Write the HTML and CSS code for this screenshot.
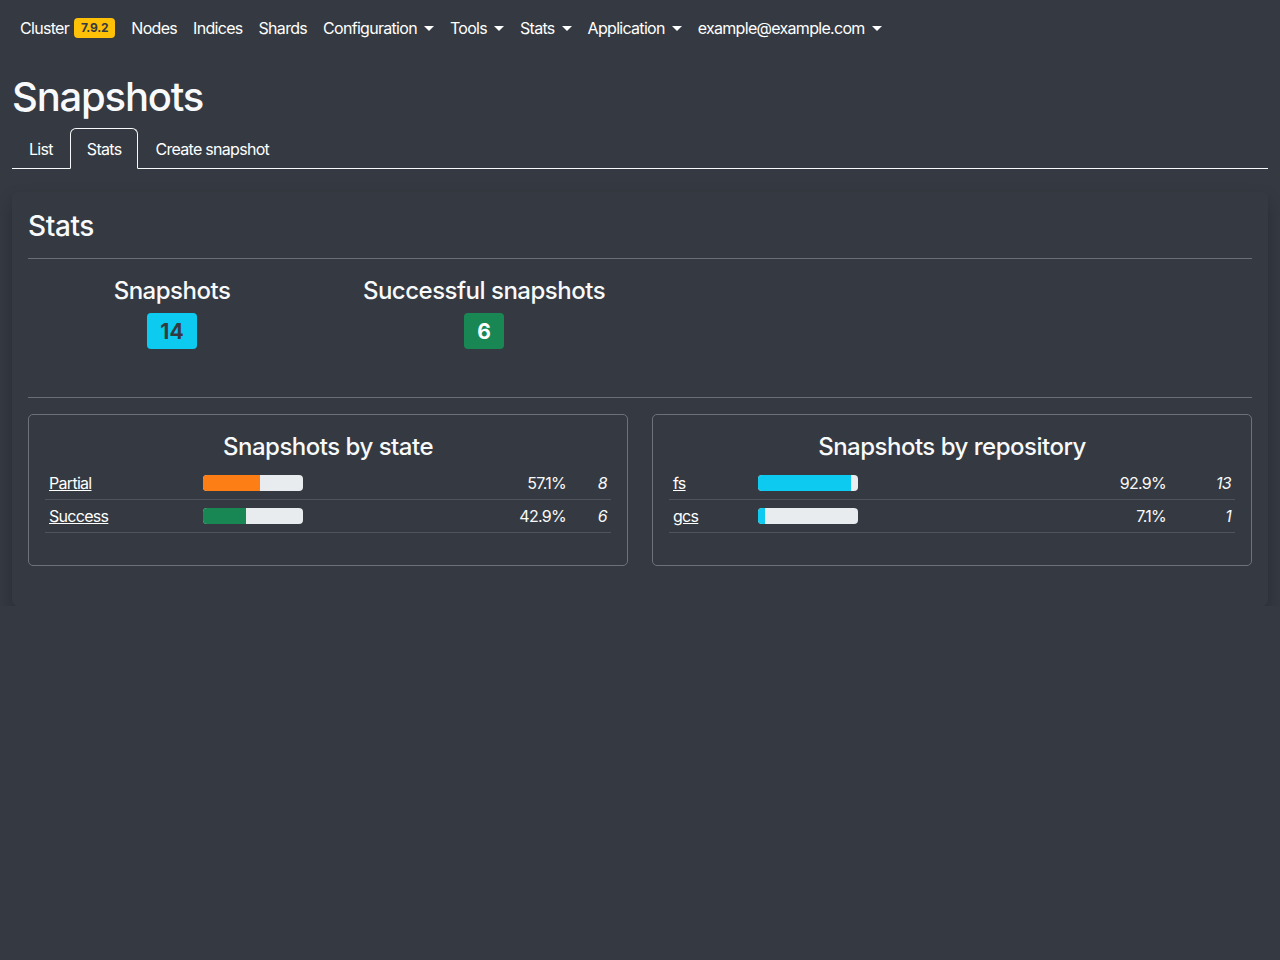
FILE: index.html
```html
<!DOCTYPE html>
<html lang="en">
<head>
<meta charset="utf-8">
<title>Snapshots</title>
<link rel="stylesheet" href="styles.css">
</head>
<body>
<nav class="navbar">
  <ul class="nav-list">
    <li><a class="nav-link" href="#">Cluster <span class="badge-version">7.9.2</span></a></li>
    <li><a class="nav-link" href="#">Nodes</a></li>
    <li><a class="nav-link" href="#">Indices</a></li>
    <li><a class="nav-link" href="#">Shards</a></li>
    <li><a class="nav-link dropdown" href="#">Configuration</a></li>
    <li><a class="nav-link dropdown" href="#">Tools</a></li>
    <li><a class="nav-link dropdown" href="#">Stats</a></li>
    <li><a class="nav-link dropdown" href="#">Application</a></li>
    <li><a class="nav-link dropdown" href="#">example@example.com</a></li>
  </ul>
</nav>
<main class="container">
  <h1 class="page-title">Snapshots</h1>
  <ul class="tabs">
    <li><a class="tab" href="#">List</a></li>
    <li><a class="tab active" href="#">Stats</a></li>
    <li><a class="tab" href="#">Create snapshot</a></li>
  </ul>
  <section class="card">
    <h3 class="card-title">Stats</h3>
    <hr class="rule rule-top">
    <div class="summary-row">
      <div class="summary-col">
        <h4 class="summary-label">Snapshots</h4>
        <div class="summary-value"><span class="badge badge-info">14</span></div>
      </div>
      <div class="summary-col">
        <h4 class="summary-label">Successful snapshots</h4>
        <div class="summary-value"><span class="badge badge-success">6</span></div>
      </div>
    </div>
    <hr class="rule rule-mid">
    <div class="boxes">
      <div class="box">
        <h4 class="box-title">Snapshots by state</h4>
        <table class="stat-table state-table">
          <tr>
            <td class="c-name"><a href="#">Partial</a></td>
            <td class="c-bar"><div class="bar"><div class="fill fill-orange" style="width:57.1%"></div></div></td>
            <td class="c-pct">57.1%</td>
            <td class="c-count">8</td>
          </tr>
          <tr>
            <td class="c-name"><a href="#">Success</a></td>
            <td class="c-bar"><div class="bar"><div class="fill fill-green" style="width:42.9%"></div></div></td>
            <td class="c-pct">42.9%</td>
            <td class="c-count">6</td>
          </tr>
        </table>
      </div>
      <div class="box">
        <h4 class="box-title">Snapshots by repository</h4>
        <table class="stat-table repo-table">
          <tr>
            <td class="c-name"><a href="#">fs</a></td>
            <td class="c-bar"><div class="bar"><div class="fill fill-cyan" style="width:92.9%"></div></div></td>
            <td class="c-pct">92.9%</td>
            <td class="c-count">13</td>
          </tr>
          <tr>
            <td class="c-name"><a href="#">gcs</a></td>
            <td class="c-bar"><div class="bar"><div class="fill fill-cyan" style="width:7.1%"></div></div></td>
            <td class="c-pct">7.1%</td>
            <td class="c-count">1</td>
          </tr>
        </table>
      </div>
    </div>
  </section>
</main>
</body>
</html>
```

FILE: styles.css
```css
* { box-sizing: border-box; }
html, body {
  margin: 0;
  padding: 0;
}
body {
  background: #353a42;
  color: #f8f9fa;
  font-family: Inter, "Noto Sans", "Liberation Sans", sans-serif;
  font-size: 16px;
  line-height: 1.5;
  letter-spacing: -0.7px;
}
a { color: #fff; }

.navbar {
  padding: 8px 12px;
  height: 56px;
}
.nav-list {
  list-style: none;
  margin: 0;
  padding: 0;
  display: flex;
  align-items: center;
}
.nav-link {
  display: flex;
  align-items: center;
  padding: 8px;
  color: #fff;
  text-decoration: none;
  line-height: 24px;
}
.dropdown::after {
  content: "";
  display: block;
  width: 0;
  height: 0;
  margin-left: 7px;
  border-top: 5px solid #fff;
  border-left: 5px solid transparent;
  border-right: 5px solid transparent;
}
.badge-version {
  display: inline-block;
  margin-left: 5px;
  background: #ffc107;
  color: #343a40;
  font-size: 12px;
  font-weight: 700;
  line-height: 12px;
  padding: 4px 7px;
  border-radius: 4px;
  letter-spacing: -0.2px;
}

.container {
  padding: 0 12px;
}
.page-title {
  font-size: 40px;
  font-weight: 500;
  line-height: 48px;
  margin: 17px 0 7px;
  letter-spacing: -1.2px;
}
.tabs {
  list-style: none;
  margin: 0;
  padding: 0;
  display: flex;
  border-bottom: 1px solid #f8f9fa;
}
.tab {
  display: block;
  padding: 9px 16px 7px;
  line-height: 23px;
  color: #fff;
  text-decoration: none;
  border: 1px solid transparent;
  border-top-left-radius: 6px;
  border-top-right-radius: 6px;
  margin-bottom: -1px;
}
.tab.active {
  border-color: #f8f9fa #f8f9fa #353a42;
  background: #353a42;
}

.card {
  margin-top: 23px;
  padding: 18px 16px 40px;
  background: #353a42;
  border-radius: 6px;
  box-shadow: 0 0.5rem 1rem rgba(0, 0, 0, 0.25);
}
.card-title {
  font-size: 28px;
  font-weight: 500;
  line-height: 33.6px;
  margin: 0;
  letter-spacing: -0.4px;
}
.rule {
  border: 0;
  border-top: 1px solid #6a6f76;
}
.rule-top { margin: 14px 0 18px; }
.rule-mid { margin: 0 0 16px; }
.summary-row {
  display: grid;
  grid-template-columns: repeat(4, 1fr);
  column-gap: 24px;
  padding-bottom: 48px;
}
.summary-col {
  text-align: center;
}
.summary-label {
  font-size: 24px;
  font-weight: 500;
  line-height: 28.8px;
  margin: 0 0 8px;
  letter-spacing: -0.5px;
}
.summary-value {
  font-size: 28px;
  line-height: 36px;
}
.badge {
  display: inline-block;
  font-size: 21px;
  font-weight: 700;
  line-height: 21px;
  padding: 7.5px 13.6px;
  border-radius: 4px;
  vertical-align: top;
  letter-spacing: 0;
}
.badge-info { background: #0dcaf0; color: #343a40; }
.badge-success { background: #198754; color: #fff; }

.boxes {
  display: grid;
  grid-template-columns: 1fr 1fr;
  column-gap: 24px;
}
.box {
  border: 1px solid #6c727a;
  border-radius: 5px;
  padding: 18px 16px 16px;
}
.box-title {
  font-size: 24px;
  font-weight: 500;
  line-height: 28.8px;
  text-align: center;
  margin: 0 0 5px;
  letter-spacing: -0.5px;
}
.stat-table {
  width: 100%;
  border-collapse: collapse;
  margin-bottom: 16px;
  table-layout: fixed;
}
.stat-table td {
  padding: 0 4px;
  height: 32.5px;
  border-bottom: 1px solid #4e545b;
  vertical-align: middle;
  line-height: 24px;
}
.state-table .c-name { width: 154px; }
.repo-table .c-name { width: 85px; }
.c-bar { width: 108px; }
.c-pct { text-align: right; }
.state-table .c-count { width: 41px; }
.repo-table .c-count { width: 65px; }
.c-count {
  text-align: right;
  font-style: italic;
}
.bar {
  width: 100px;
  height: 16px;
  background: #e9ecef;
  border-radius: 4px;
  overflow: hidden;
  display: flex;
}
.fill { height: 100%; }
.fill-orange { background: #fd7e14; }
.fill-green { background: #198754; }
.fill-cyan { background: #0dcaf0; }
```
